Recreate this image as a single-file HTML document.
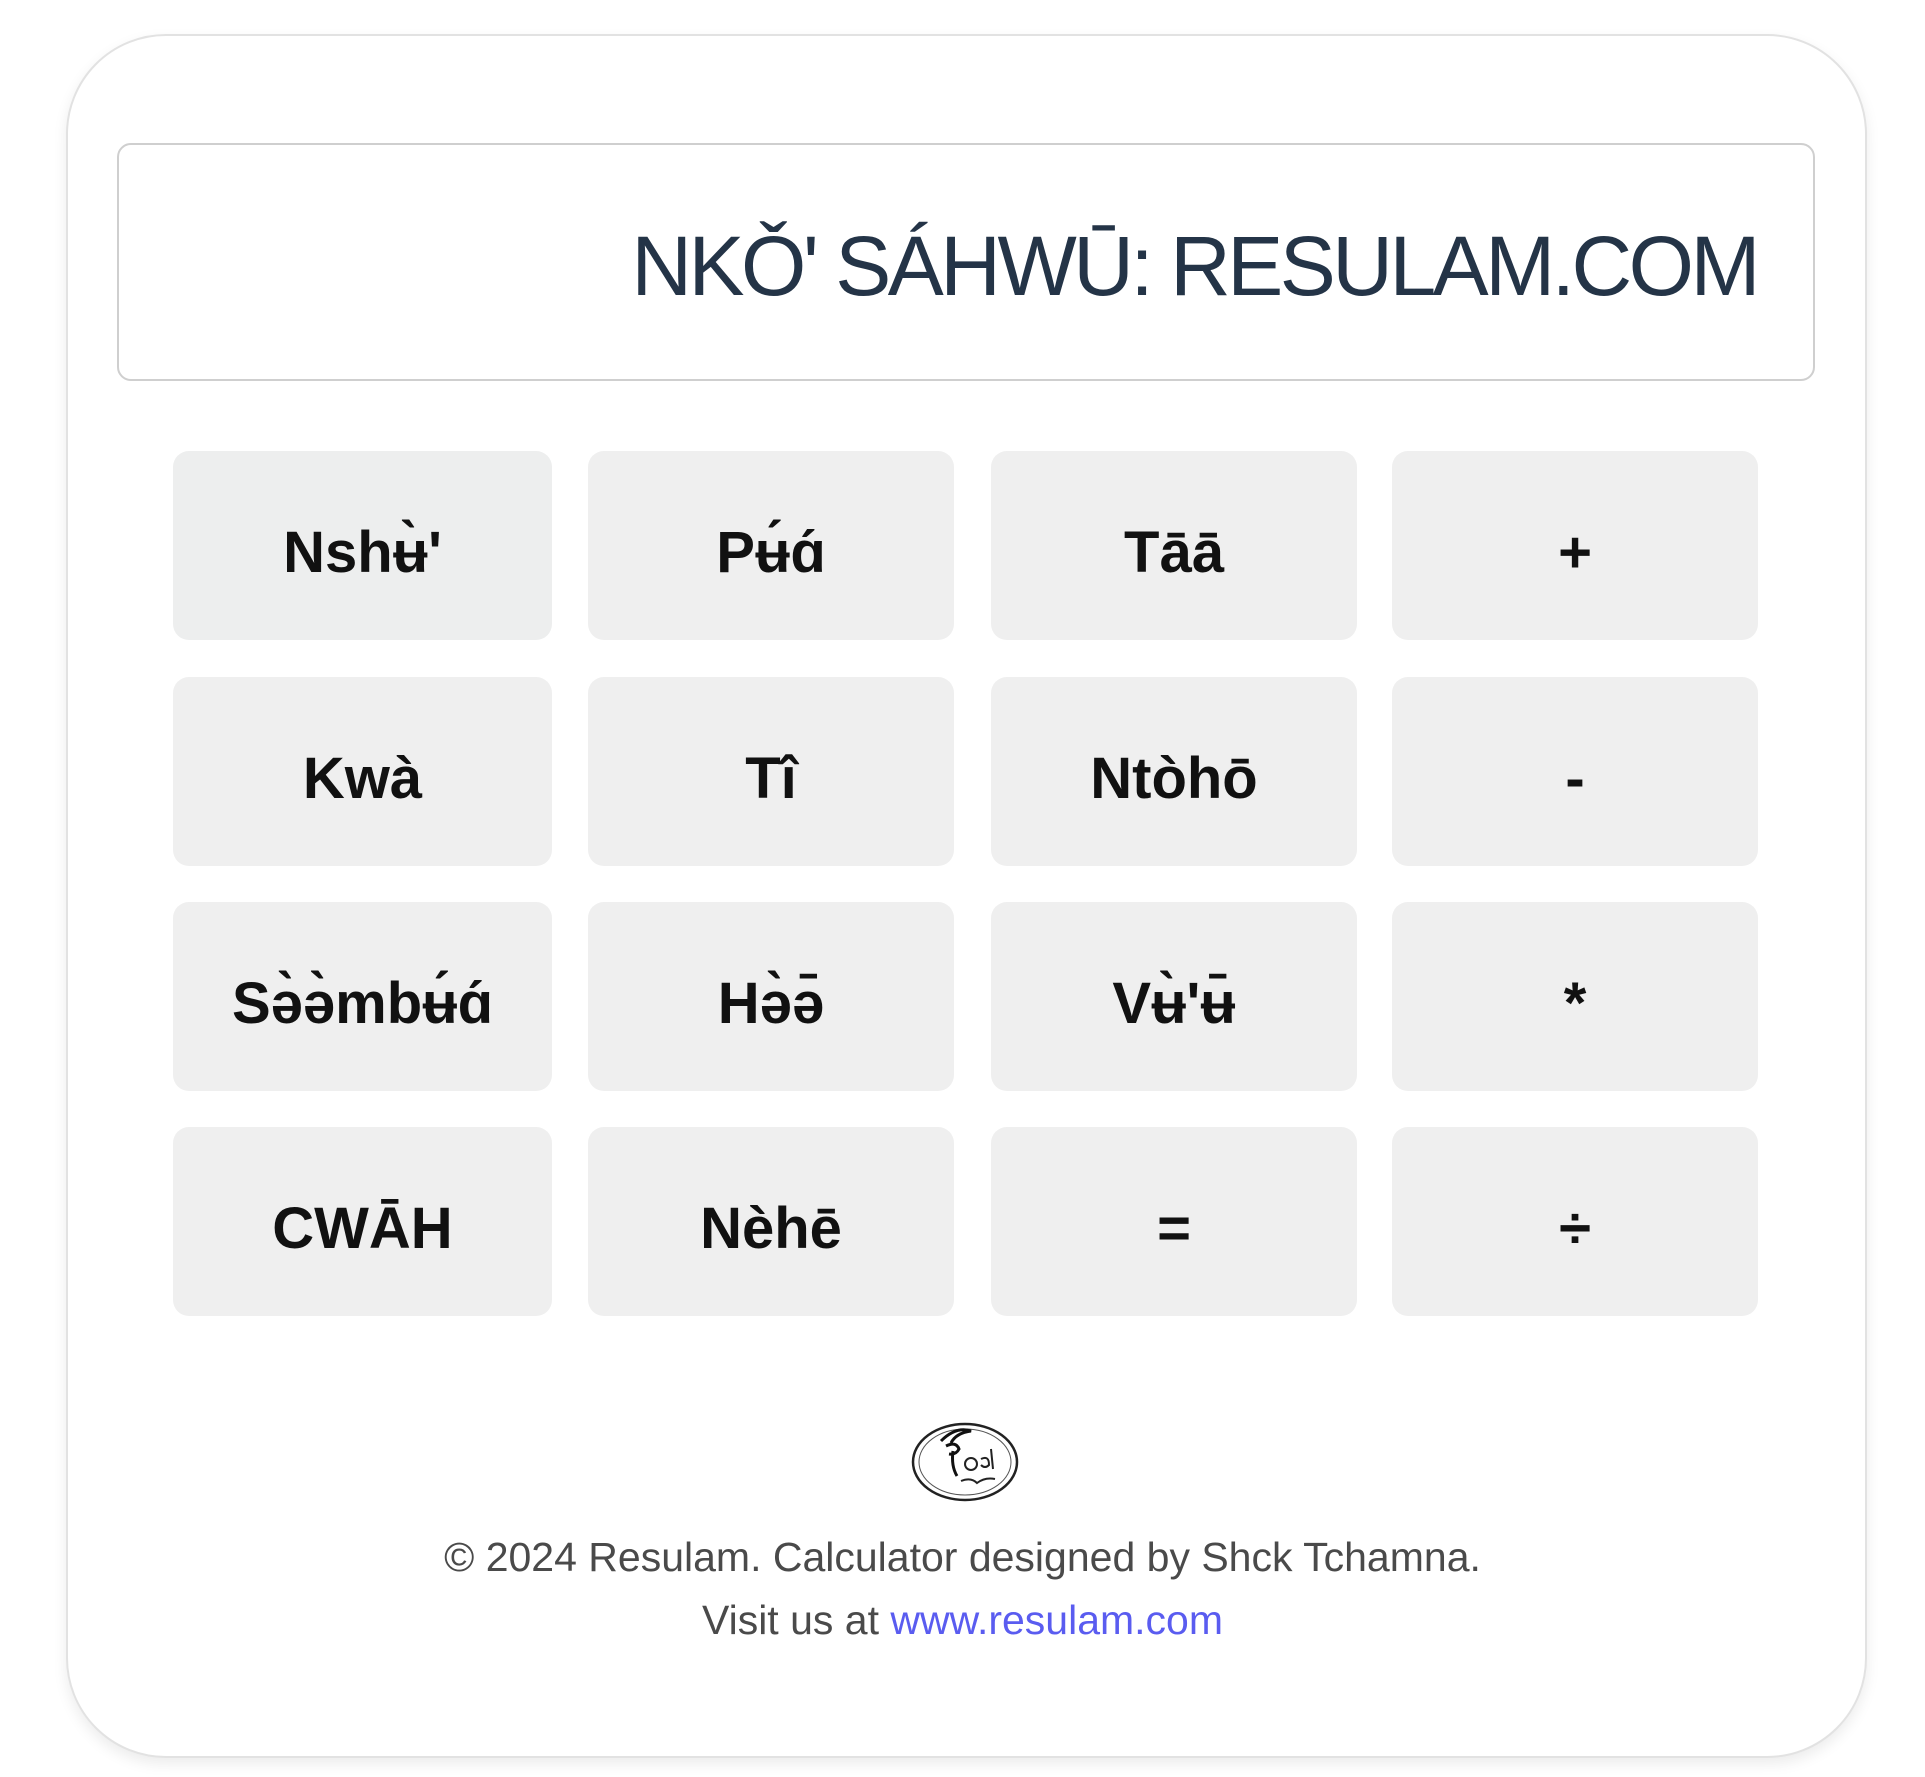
<!DOCTYPE html>
<html><head><meta charset="utf-8"><style>
html,body{margin:0;padding:0;background:#fff;width:1925px;height:1777px;overflow:hidden;font-family:"Liberation Sans","DejaVu Sans",sans-serif;}
.card{position:absolute;left:66px;top:34px;width:1797px;height:1720px;border:2px solid #e2e2e2;border-radius:100px;background:#fff;box-shadow:0 6px 14px rgba(0,0,0,0.08);}
.disp{position:absolute;left:117px;top:143px;width:1694px;height:234px;border:2px solid #cfcfcf;border-radius:14px;background:#fff;}
.disp span{position:absolute;right:56px;top:71px;font-size:84px;line-height:100px;color:#243447;letter-spacing:-3.5px;white-space:nowrap;}
.b{position:absolute;height:189px;background:#efefef;border-radius:16px;display:flex;align-items:center;justify-content:center;font-weight:bold;font-size:58px;color:#111;padding-top:14px;box-sizing:border-box;}
.foot{position:absolute;left:0;width:1925px;text-align:center;font-size:41px;color:#4a4a4a;}
.foot a{color:#5a5cf0;text-decoration:none;}
</style></head><body>
<div class="card"></div>
<div class="disp"><span>NKǑ' SÁHWŪ: RESULAM.COM</span></div>

<div class="b" style="left:173px;top:451px;width:379px;background:#edeeee">Nshʉ̀'</div>
<div class="b" style="left:588px;top:451px;width:366px">Pʉ́ɑ́</div>
<div class="b" style="left:991px;top:451px;width:366px">Tāā</div>
<div class="b" style="left:1392px;top:451px;width:366px">+</div>

<div class="b" style="left:173px;top:677px;width:379px">Kwà</div>
<div class="b" style="left:588px;top:677px;width:366px">Tî</div>
<div class="b" style="left:991px;top:677px;width:366px">Ntòhō</div>
<div class="b" style="left:1392px;top:677px;width:366px">-</div>

<div class="b" style="left:173px;top:902px;width:379px">Sə̀ə̀mbʉ́ɑ́</div>
<div class="b" style="left:588px;top:902px;width:366px">Hə̀ə̄</div>
<div class="b" style="left:991px;top:902px;width:366px">Vʉ̀'ʉ̄</div>
<div class="b" style="left:1392px;top:902px;width:366px">*</div>

<div class="b" style="left:173px;top:1127px;width:379px">CWĀH</div>
<div class="b" style="left:588px;top:1127px;width:366px">Nèhē</div>
<div class="b" style="left:991px;top:1127px;width:366px">=</div>
<div class="b" style="left:1392px;top:1127px;width:366px">÷</div>

<svg style="position:absolute;left:911px;top:1421px" width="108" height="82" viewBox="0 0 108 82">
<ellipse cx="54" cy="41" rx="52" ry="38" fill="none" stroke="#222" stroke-width="2.5"/>
<ellipse cx="54" cy="41" rx="46" ry="33" fill="none" stroke="#555" stroke-width="1"/>
<path d="M30 20 Q45 5 60 10 Q45 12 40 22 M35 25 Q45 20 48 28 Q45 34 38 33 M42 30 Q40 45 46 55" fill="none" stroke="#111" stroke-width="3"/>
<circle cx="60" cy="43" r="6" fill="none" stroke="#222" stroke-width="2"/>
<path d="M70 38 Q78 34 78 44 Q74 48 70 44 M80 28 L82 48" fill="none" stroke="#222" stroke-width="2"/>
<path d="M50 60 Q60 56 66 62 Q74 56 84 58" fill="none" stroke="#222" stroke-width="2"/>
</svg>

<div class="foot" style="top:1534px">© 2024 Resulam. Calculator designed by Shck Tchamna.</div>
<div class="foot" style="top:1597px">Visit us at <a>www.resulam.com</a></div>
</body></html>
